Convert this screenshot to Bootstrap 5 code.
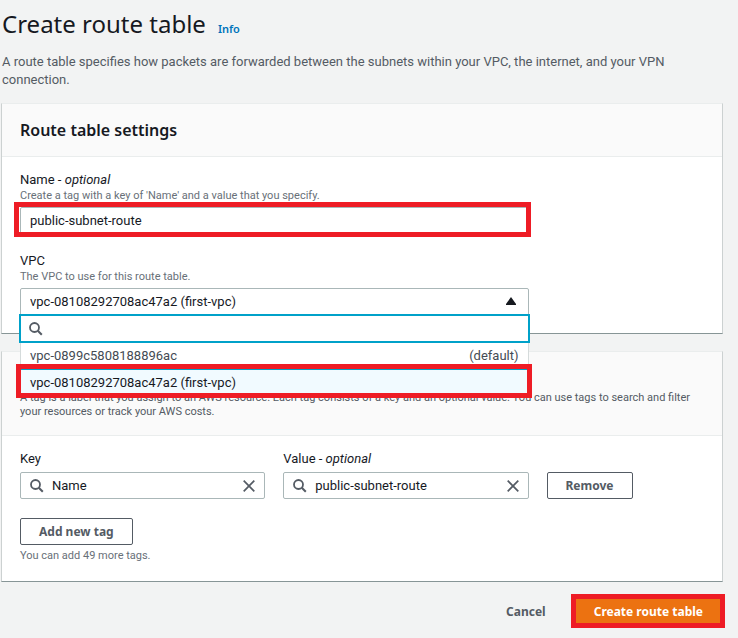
<!DOCTYPE html>
<html lang="en">
<head>
<meta charset="utf-8">
<meta name="viewport" content="width=device-width, initial-scale=1">
<title>Create route table</title>
<link href="https://cdn.jsdelivr.net/npm/bootstrap@5.3.0/dist/css/bootstrap.min.css" rel="stylesheet">
<style>
  body { background: #f2f3f3; color: #16191f; font-family: Roboto, "Noto Sans", sans-serif; font-size: 13px; line-height: 18px; }
  .page { padding: 6px 15px 10px 1px; }
  .page-title, .info-link, .panel-top h2, .action { font-family: "Noto Sans", "Open Sans", sans-serif; }
  .page-title { font-size: 24px; line-height: 36px; font-weight: 400; padding-left: 1px; }
  .info-link { font-size: 11px; font-weight: 600; color: #0073bb; text-decoration: none; margin-left: 12px; }
  .intro { color: #545b64; padding-left: 1px; margin: 11px 0 14px; }
  .panel { background: #fff; border: 1px solid #ccd1d1; border-top-color: #eaeded; border-bottom-color: #879596; margin-bottom: 17px; }
  .panel-top { background: #fafafa; border-bottom: 1px solid #eaeded; padding: 15px 18px; }
  .panel-top h2 { font-size: 16px; line-height: 22px; font-weight: 600; }
  .panel-tags { padding-top: 39px; padding-bottom: 16px; color: #545b64; font-size: 11px; line-height: 14px; }
  .panel-main { padding: 14px 18px 18px; }
  .grid-18 { --bs-gutter-x: 18px; }
  .hint { color: #687078; font-size: 11px; line-height: 14px; }
  .gap-above { margin-top: 18px; }
  .field { display: flex; align-items: center; background: #fff; border: 1px solid #aab7b8; border-radius: 2px; height: 27px; padding: 0 9px; color: #16191f; }
  .field input, .search-box input { border: 0; outline: 0; background: transparent; padding: 0; min-width: 0; color: inherit; }
  .field svg, .search-box svg { flex: none; color: #545b64; }
  .vpc-select { width: 100%; appearance: none; border-bottom-left-radius: 0; border-bottom-right-radius: 0; }
  .vpc-arrow { right: 13px; top: 9px; pointer-events: none; }
  .vpc-menu { top: 26px; left: -1px; right: -1px; z-index: 5; }
  .search-box { height: 29px; border: 2px solid #00a1c9; background: #fff; padding: 0 8px; }
  .vpc-list { margin: 0 1px; background: #fff; border: 1px solid #d5dbdb; border-top: 0; }
  .vpc-list li { padding: 4px 9px; color: #444b54; line-height: 18px; }
  .vpc-list .chosen { background: #f1faff; border-top: 1px solid #00a1c9; color: #16191f; }
  .marked { position: relative; }
  .marked::after { content: ""; position: absolute; border: 5px solid #ee1c25; inset: -5px -2px -3px -6px; pointer-events: none; }
  .vpc-list .marked::after { inset: -6px -4px -2px -5px; }
  .submit-wrap.marked::after { inset: -4px -3px -3px -4px; }
  .clear { border: 0; background: transparent; padding: 0; line-height: 0; }
  .action { display: block; border: 1px solid #545b64; border-radius: 2px; background: #fff; color: #545b64; font-size: 12px; font-weight: 700; line-height: 18px; height: 27px; padding: 3px 18px; }
  .add-tag { margin-top: 19px; }
  .page-actions { margin-top: -1px; padding-right: 1px; }
  .action-plain { border-color: transparent; background: transparent; margin-right: 10px; }
  .action-main { background: #ec7211; border-color: #ec7211; color: #fff; }
</style>
</head>
<body>
<svg class="d-none">
  <symbol id="i-search" viewBox="0 0 14 14"><circle cx="5.5" cy="5.5" r="4.5" fill="none" stroke="currentColor" stroke-width="1.8"/><path d="M8.8 8.8l4 4" stroke="currentColor" stroke-width="2"/></symbol>
  <symbol id="i-close" viewBox="0 0 12 12"><path d="M.7.7l10.6 10.6M11.3.7L.7 11.3" stroke="currentColor" stroke-width="1.7"/></symbol>
</svg>
<main class="page">
  <header>
    <div class="d-flex align-items-baseline">
      <h1 class="page-title mb-0">Create route table</h1>
      <a class="info-link" href="#">Info</a>
    </div>
    <p class="intro">A route table specifies how packets are forwarded between the subnets within your VPC, the internet, and your VPN connection.</p>
  </header>

  <section class="panel">
    <div class="panel-top"><h2 class="mb-0">Route table settings</h2></div>
    <div class="panel-main">
      <div class="row grid-18">
        <div class="col-9">
          <label class="d-block" for="rt-name">Name - <em>optional</em></label>
          <div class="hint mb-1" id="name-hint">Create a tag with a key of 'Name' and a value that you specify.</div>
          <div class="marked">
            <div class="field"><input class="w-100" id="rt-name" type="text" value="public-subnet-route" aria-describedby="name-hint"></div>
          </div>
          <label class="d-block gap-above" for="rt-vpc">VPC</label>
          <div class="hint mb-1">The VPC to use for this route table.</div>
          <div class="position-relative">
            <select class="field vpc-select" id="rt-vpc"><option>vpc-08108292708ac47a2 (first-vpc)</option></select>
            <svg class="vpc-arrow position-absolute" width="10" height="8" viewBox="0 0 10 8"><path d="M5 0l5 7v1H0V7z" fill="#16191f"/></svg>
            <div class="vpc-menu position-absolute">
              <div class="search-box d-flex align-items-center">
                <svg width="14" height="14"><use href="#i-search"/></svg>
                <input class="flex-fill" type="text" aria-label="Search VPCs">
              </div>
              <ul class="vpc-list list-unstyled mb-0" role="listbox" aria-label="VPCs">
                <li class="d-flex justify-content-between" role="option"><span>vpc-0899c5808188896ac</span><span>(default)</span></li>
                <li class="chosen marked" role="option" aria-selected="true">vpc-08108292708ac47a2 (first-vpc)</li>
              </ul>
            </div>
          </div>
        </div>
      </div>
    </div>
  </section>

  <section class="panel">
    <div class="panel-top panel-tags">A tag is a label that you assign to an AWS resource. Each tag consists of a key and an optional value. You can use tags to search and filter your resources or track your AWS costs.</div>
    <div class="panel-main">
      <div class="row grid-18 align-items-end">
        <div class="col-9">
          <div class="row grid-18">
            <div class="col-6">
              <label class="d-block mb-1" for="tag-key">Key</label>
              <div class="field">
                <svg width="14" height="14"><use href="#i-search"/></svg>
                <input class="flex-fill ms-2" id="tag-key" type="text" value="Name">
                <button class="clear" type="button" aria-label="Clear key"><svg width="12" height="12"><use href="#i-close"/></svg></button>
              </div>
            </div>
            <div class="col-6">
              <label class="d-block mb-1" for="tag-value">Value - <em>optional</em></label>
              <div class="field">
                <svg width="14" height="14"><use href="#i-search"/></svg>
                <input class="flex-fill ms-2" id="tag-value" type="text" value="public-subnet-route">
                <button class="clear" type="button" aria-label="Clear value"><svg width="12" height="12"><use href="#i-close"/></svg></button>
              </div>
            </div>
          </div>
        </div>
        <div class="col-3"><button class="action" type="button">Remove</button></div>
      </div>
      <button class="action add-tag" type="button">Add new tag</button>
      <div class="hint mt-1">You can add 49 more tags.</div>
    </div>
  </section>

  <footer class="page-actions d-flex justify-content-end">
    <button class="action action-plain" type="button">Cancel</button>
    <div class="submit-wrap marked"><button class="action action-main" type="button">Create route table</button></div>
  </footer>
</main>
<script src="https://cdn.jsdelivr.net/npm/bootstrap@5.3.0/dist/js/bootstrap.bundle.min.js"></script>
</body>
</html>
